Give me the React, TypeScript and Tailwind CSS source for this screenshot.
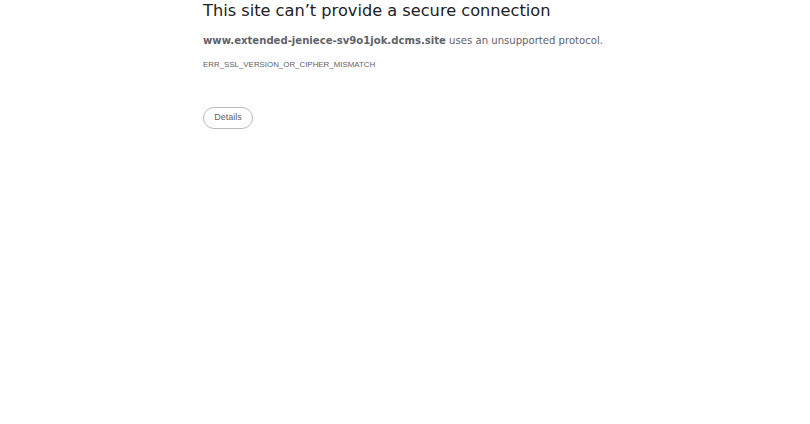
export default function App() {
  return (
    <div className="w-[810px] h-[424px] bg-white relative overflow-hidden" style={{ fontFamily: '"DejaVu Sans", sans-serif' }}>
      <div className="pl-[203px] pt-[1px]">
        <h1 className="text-[16.2px] leading-[20px] text-[#202124]">This site can’t provide a secure connection</h1>
        <p className="mt-[12px] text-[10.1px] leading-[16px] text-[#5f6368]">
          <span className="font-bold">www.extended-jeniece-sv9o1jok.dcms.site</span> uses an unsupported protocol.
        </p>
        <div className="mt-[10px] text-[7.9px] leading-[12px] text-[#5f6368]" style={{ fontFamily: '"Liberation Sans", sans-serif' }}>ERR_SSL_VERSION_OR_CIPHER_MISMATCH</div>
        <button className="mt-[36px] h-[22px] w-[50px] rounded-full border border-[#bbbbbb] text-[9px] text-[#5f6368] bg-white" style={{ fontFamily: '"Liberation Sans", sans-serif' }}>Details</button>
      </div>
    </div>
  );
}
